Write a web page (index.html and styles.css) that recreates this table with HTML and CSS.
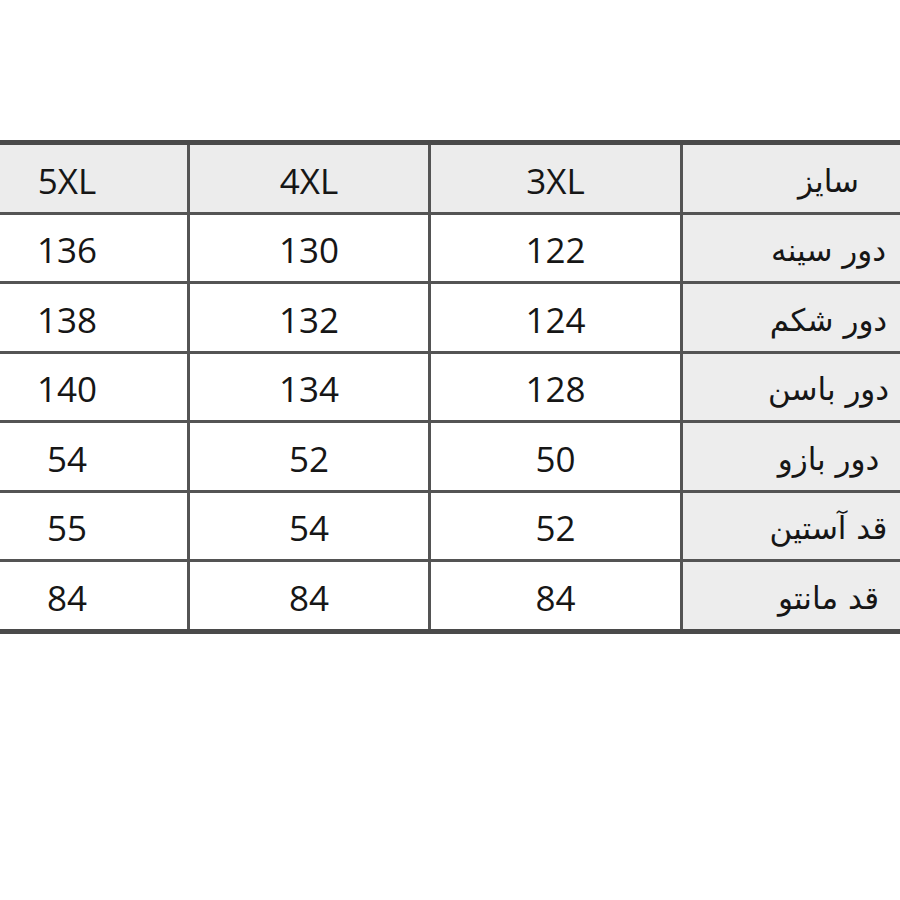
FILE: index.html
```html
<!DOCTYPE html>
<html lang="fa">
<head>
<meta charset="utf-8">
<title>جدول سایز</title>
<link rel="stylesheet" href="styles.css">
</head>
<body>
<div class="page">
  <table class="sizes">
    <colgroup>
      <col class="c-5">
      <col class="c-4">
      <col class="c-3">
      <col class="c-label">
    </colgroup>
    <tr class="head">
      <td class="num">5XL</td>
      <td class="num">4XL</td>
      <td class="num">3XL</td>
      <td class="label">سایز</td>
    </tr>
    <tr>
      <td class="num">136</td>
      <td class="num">130</td>
      <td class="num">122</td>
      <td class="label">دور سینه</td>
    </tr>
    <tr>
      <td class="num">138</td>
      <td class="num">132</td>
      <td class="num">124</td>
      <td class="label">دور شکم</td>
    </tr>
    <tr>
      <td class="num">140</td>
      <td class="num">134</td>
      <td class="num">128</td>
      <td class="label">دور باسن</td>
    </tr>
    <tr>
      <td class="num">54</td>
      <td class="num">52</td>
      <td class="num">50</td>
      <td class="label">دور بازو</td>
    </tr>
    <tr>
      <td class="num">55</td>
      <td class="num">54</td>
      <td class="num">52</td>
      <td class="label">قد آستین</td>
    </tr>
    <tr class="last">
      <td class="num">84</td>
      <td class="num">84</td>
      <td class="num">84</td>
      <td class="label">قد مانتو</td>
    </tr>
  </table>
</div>
</body>
</html>
```

FILE: styles.css
```css
html, body {
  margin: 0;
  padding: 0;
  background: #ffffff;
}

.page {
  width: 900px;
  height: 900px;
  overflow: hidden;
  position: relative;
  padding-top: 140px;
  box-sizing: border-box;
}

.sizes {
  border-collapse: collapse;
  table-layout: fixed;
  margin-left: -56px;
  width: 1030px;
  color: #161616;
}

.c-5 { width: 243px; }
.c-4 { width: 241px; }
.c-3 { width: 252px; }
.c-label { width: 294px; }

.sizes td {
  border: 3px solid #545454;
  height: 61.5px;
  padding: 5px 0 0 0;
  text-align: center;
  vertical-align: middle;
  background: #ffffff;
}

.sizes tr.head td {
  border-top: 5px solid #4a4a4a;
  background: #ececec;
}

.sizes tr.last td {
  border-bottom: 5px solid #4a4a4a;
}

.sizes td.num {
  font-family: "Open Sans", "Liberation Sans", sans-serif;
  font-size: 35px;
  line-height: 40px;
}

.sizes td.label {
  font-family: "DejaVu Sans", "Noto Sans", sans-serif;
  font-size: 31px;
  line-height: 40px;
  direction: rtl;
  background: #ededed;
}
```
